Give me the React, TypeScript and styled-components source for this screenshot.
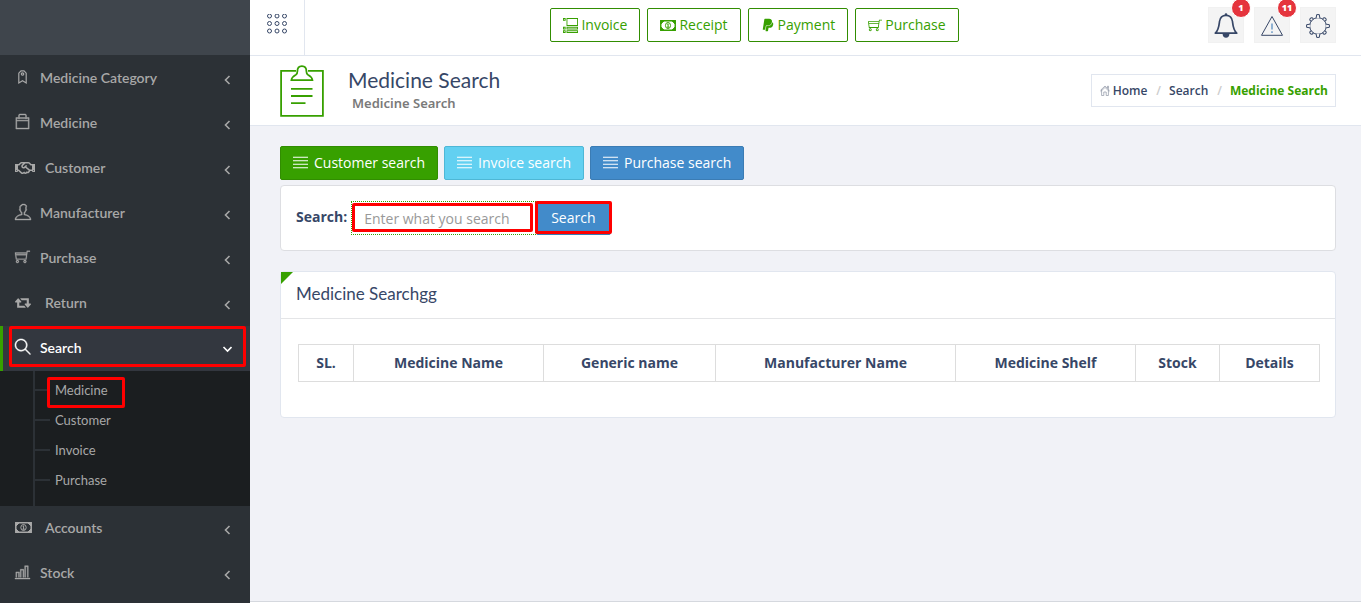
import React from "react";
import styled, { createGlobalStyle, css } from "styled-components";
import {
  TfiBag,
  TfiUser,
  TfiShoppingCart,
  TfiSearch,
  TfiBarChart,
  TfiAlignJustify,
  TfiLayoutAccordionList,
} from "react-icons/tfi";
import { FaRegHandshake, FaPaypal } from "react-icons/fa";

const heading = `Lato, "Noto Sans", sans-serif`;
const green = "#37a000";
const ink = "#374767";
const line = "#e1e6ef";

const GlobalStyle = createGlobalStyle`
  *, *::before, *::after { box-sizing: border-box; }
  body {
    margin: 0;
    background: #f1f2f7;
    color: ${ink};
    font: 14px/20px "Open Sans", sans-serif;
  }
  a { color: inherit; text-decoration: none; }
  button, input { font: inherit; }
  h1, h2, ul, ol { margin: 0; padding: 0; list-style: none; font-weight: 400; }
  svg { display: block; flex: none; }
`;

const marker = css`
  &::after {
    content: "";
    position: absolute;
    border: 3px solid #ff0000;
    border-radius: 2px;
    pointer-events: none;
  }
`;

const Shell = styled.div`
  display: flex;
  min-height: 100vh;
`;

const Sidebar = styled.aside`
  flex: none;
  width: 250px;
  background: #2c3136;
  color: #a8a8a8;
  font-family: ${heading};
`;

const Logo = styled.div`
  height: 55px;
  margin-bottom: 1px;
  background: #3f454c;
`;

const MenuLink = styled.a<{ $active?: boolean }>`
  position: relative;
  display: flex;
  align-items: center;
  height: 45px;
  padding: 0 18px 2px 15px;
  font-size: 14px;
  font-weight: 600;
  ${(p) =>
    p.$active &&
    css`
      background: #33373f;
      color: #fff;
      border-left: 3px solid ${green};
      padding-left: 12px;
      ${marker}
      &::after {
        inset: 0 4px 4px 6px;
      }
    `}
`;

const MenuIcon = styled.span<{ $wide?: boolean }>`
  display: flex;
  justify-content: ${(p) => (p.$wide ? "flex-start" : "center")};
  width: ${(p) => (p.$wide ? 20 : 15)}px;
  margin-right: 10px;
  padding-bottom: ${(p) => (p.$wide ? 0 : 2)}px;

  svg {
    overflow: visible;
  }
`;

const MenuLabel = styled.span`
  flex: 1;
`;

const ArrowBox = styled.span`
  width: 10px;
  padding-top: 4px;
`;

const SubMenu = styled.div`
  background: #1b1e20;
  padding-left: 33px;
`;

const SubTrack = styled.ul`
  && {
    border-left: 2px solid #2c3136;
    padding: 4px 0 11px;
  }
`;

const SubItem = styled.li`
  display: flex;
  align-items: center;
  height: 30px;
  font-size: 13px;

  &::before {
    content: "";
    width: 15px;
    height: 2px;
    margin-right: 5px;
    background: #2c3136;
  }
`;

const SubLink = styled.a<{ $marked?: boolean }>`
  position: relative;
  ${(p) =>
    p.$marked &&
    css`
      ${marker}
      &::after {
        inset: -3px -17px -8px -8px;
      }
    `}
`;

const Page = styled.div`
  flex: 1;
  min-width: 0;
  display: flex;
  flex-direction: column;
`;

const TopBar = styled.header`
  display: flex;
  align-items: stretch;
  height: 56px;
  background: #fff;
  border-bottom: 1px solid ${line};
`;

const Toggle = styled.button`
  width: 55px;
  padding: 0 0 8px 17px;
  border: 0;
  border-right: 1px solid ${line};
  background: none;
  color: ${ink};
`;

const QuickLinks = styled.nav`
  flex: 1;
  display: flex;
  align-items: flex-start;
  justify-content: center;
  gap: 7px;
  padding: 8px 4px 0 0;
`;

const QuickLink = styled.a`
  display: flex;
  align-items: center;
  gap: 3px;
  height: 34px;
  padding: 0 12px;
  border: 1px solid #318d01;
  border-radius: 2px;
  color: ${green};
`;

const Alerts = styled.div`
  display: flex;
  gap: 10px;
  padding: 7px 25px 0 0;
`;

const AlertButton = styled.button`
  position: relative;
  width: 36px;
  height: 36px;
  display: grid;
  place-items: center;
  padding: 2px 0 0;
  border: 1px solid #f1f1f1;
  background: #f4f4f4;
  color: ${ink};
`;

const Badge = styled.span`
  position: absolute;
  top: -10px;
  right: -8px;
  width: 20px;
  height: 20px;
  border: 1px solid #fff;
  border-radius: 50%;
  background: #e5343d;
  color: #fff;
  font: 800 9px/18px "Open Sans", sans-serif;
  text-align: center;
`;

const PageHead = styled.section`
  display: flex;
  align-items: center;
  height: 70px;
  padding: 0 25px 0 30px;
  background: #fff;
  border-bottom: 1px solid ${line};
`;

const Titles = styled.div`
  flex: 1;
  padding: 0 0 2px 24px;
`;

const Title = styled.h1`
  font: 400 21px/26px ${heading};
`;

const Subtitle = styled.p`
  margin: 0 0 0 4px;
  font: 600 13px/20px "Noto Sans", sans-serif;
  color: #7a7a7a;
`;

const Crumbs = styled.ol`
  && {
    display: flex;
    align-items: center;
    height: 33px;
    padding: 0 7px 0 8px;
    border: 1px solid ${line};
    font-size: 12px;
    font-weight: 600;
  }
`;

const Crumb = styled.li<{ $current?: boolean }>`
  display: flex;
  align-items: center;
  gap: 3px;
  ${(p) =>
    p.$current &&
    css`
      color: ${green};
      font-weight: 700;
    `}

  li + &::before {
    content: "/";
    padding: 0 5px 0 9px;
    color: #ccc;
    font-weight: 600;
  }
`;

const Content = styled.main`
  flex: 1;
  padding: 20px 25px 20px 30px;
`;

const Actions = styled.div`
  display: flex;
  gap: 6px;
  margin-bottom: 5px;
`;

const tones = {
  success: "#37a000",
  info: "#62d0f1",
  primary: "#428bca",
};
const edges = {
  success: "#318d01",
  info: "#4eb7d6",
  primary: "#3b7cb4",
};

const buttonLook = css<{ $tone: keyof typeof tones }>`
  display: flex;
  align-items: center;
  gap: 6px;
  height: 34px;
  padding: 0 12px;
  border: 1px solid ${(p) => edges[p.$tone]};
  border-radius: 2px;
  background: ${(p) => tones[p.$tone]};
  color: #fff;
`;

const ActionLink = styled.a<{ $tone: keyof typeof tones }>`
  ${buttonLook}

  svg {
    margin-bottom: 2px;
  }
`;

const SearchPanel = styled.form`
  display: flex;
  align-items: flex-start;
  padding: 15px;
  height: 66px;
  border: 1px solid #dddee2;
  border-radius: 4px;
  background: #fff;
`;

const SearchLabel = styled.label`
  font-weight: 700;
  line-height: 32px;
  margin-right: 4px;
`;

const Field = styled.span`
  position: relative;
  ${marker}
  &::after {
    inset: 2px 3px 3px 1px;
  }
`;

const SearchInput = styled.input`
  display: block;
  width: 185px;
  height: 34px;
  padding: 0 12px;
  border: 1px dotted ${green};
  background: #fff;
  color: ${ink};
  outline: none;
  &::placeholder {
    color: #999;
    opacity: 1;
  }
`;

const SubmitWrap = styled.span`
  position: relative;
  ${marker}
  &::after {
    inset: 0 -1px 1px -1px;
  }
`;

const Submit = styled.button<{ $tone: keyof typeof tones }>`
  ${buttonLook}
  padding: 0 14px;
`;

const ResultPanel = styled.section`
  margin-top: 20px;
  border: 1px solid ${line};
  border-radius: 4px;
  background: #fff;
`;

const ResultHead = styled.div`
  position: relative;
  height: 47px;
  padding: 10px 15px;
  border-bottom: 1px solid #e4e5e7;

  &::before {
    content: "";
    position: absolute;
    top: 0;
    left: 0;
    border-top: 12px solid ${green};
    border-right: 12px solid transparent;
  }
`;

const ResultTitle = styled.h2`
  font: 400 17px/24px ${heading};
`;

const ResultBody = styled.div`
  padding: 25px 15px 35px 17px;
`;

const Table = styled.table`
  width: 100%;
  border-collapse: collapse;
  table-layout: fixed;
`;

const Th = styled.th<{ $width: number }>`
  width: ${(p) => p.$width}px;
  height: 37px;
  padding: 0 8px;
  border: 1px solid #ddd;
  font-weight: 700;
`;

const Footer = styled.footer`
  height: 2px;
  background: #fff;
  border-top: 1px solid #d5d8de;
`;

const Keypad = () => (
  <svg width="20" height="20" viewBox="0 0 20 20" fill="none" stroke="currentColor">
    {[2, 9.5, 17].map((y) => [2.5, 10, 17.5].map((x) => <circle key={`${x}-${y}`} cx={x} cy={y} r="2" />))}
  </svg>
);

const Arrow = ({ down }: { down?: boolean }) => (
  <svg width="10" height="10" viewBox="0 0 10 10" fill="none" stroke="currentColor" strokeWidth="1.6">
    <path d={down ? "M1.500 2l4 4 4-4" : "M7.500 1l-4 4 4 4"} />
  </svg>
);

const Tag = () => (
  <svg width="9" height="14" viewBox="0 0 9 14" fill="none" stroke="currentColor" strokeWidth="1.200">
    <path d="M.8 13V3.200L3 .8h3l2.200 2.400V13L4.500 10.800z" />
    <circle cx="4.500" cy="4" r="1.200" />
  </svg>
);

const Money = ({ width }: { width: number }) => (
  <svg width={width} height="11" viewBox="0 0 17 11" preserveAspectRatio="none" fill="none" stroke="currentColor">
    <path d="M.8.8h15.400v9.400H.8z" strokeWidth="1.500" />
    <path d="M1 1h3L1 4zM16 1h-3l3 3zM1 10h3L1 7zM16 10h-3l3-3z" fill="currentColor" />
    <ellipse cx="8.500" cy="5.500" rx="2.700" ry="3" />
    <path d="M7.700 4.300l.9-.5v3.400M7.500 7.200h2.200" />
  </svg>
);

const Retweet = () => (
  <svg width="16" height="10" viewBox="0 384 1920 1152" fill="currentColor">
    <path d="M1280 1504q0 13-9.500 22.500t-22.500 9.500h-960q-8 0-13.500-2t-9-7-5.500-8-3-11.500-1-11.500v-600h-192q-26 0-45-19t-19-45q0-24 15-41l320-384q19-22 49-22t49 22l320 384q15 17 15 41 0 26-19 45t-45 19h-192v384h576q16 0 25 11l160 192q7 10 7 21zm640-416q0 24-15 41l-320 384q-20 23-49 23t-49-23l-320-384q-15-17-15-41 0-26 19-45t45-19h192v-384h-576q-16 0-25-12l-160-192q-7-9-7-20 0-13 9.500-22.500t22.500-9.500h960q8 0 13.500 2t9 7 5.500 8 3 11.500 1 11.500v600h192q26 0 45 19t19 45z" />
  </svg>
);

const Clipboard = () => (
  <svg width="44" height="52" viewBox="0 0 44 52" fill="none" stroke={green} strokeWidth="1.8">
    <path d="M16 5.900H1.100v45h41.800v-45H28" />
    <path d="M11.400 15.100h21c-.4-2.800-2.800-4.400-4.500-5.300-1.400-.8-1.500-1.900-1.500-3.500 0-3-1.700-5.100-4.500-5.100s-4.500 2.100-4.500 5.100c0 1.600-.1 2.700-1.500 3.500-1.700.9-4.100 2.500-4.500 5.300z" />
    <path d="M11 23.800h21.500M11 31h21.500M11 38.200h14.500" />
  </svg>
);

const Bell = () => (
  <svg width="24" height="26" viewBox="0 0 24 26" fill="none" stroke="currentColor" strokeWidth="1.7">
    <path d="M12 2.300c-4 0-6 2.700-6.500 6.200-.5 4.500-.7 8.300-4.200 11.700h21.400c-3.500-3.400-3.700-7.200-4.200-11.700C18 5 16 2.300 12 2.300z" strokeLinejoin="round" />
    <path d="M8.600 21h6.800c0 2.300-1.400 3.700-3.400 3.700S8.600 23.300 8.600 21z" fill="currentColor" stroke="none" />
    <circle cx="12" cy="1.500" r="1.300" fill="currentColor" stroke="none" />
  </svg>
);

const Warning = () => (
  <svg width="24" height="22" viewBox="0 0 24 22" fill="none" stroke="currentColor">
    <path d="M12 1.500l10.500 18.800h-21z" />
    <path d="M12 8.500v6M12 16.300v1.600" stroke="#5b8fc0" strokeWidth="1.300" />
  </svg>
);

const Gear = () => (
  <svg width="24" height="24" viewBox="0 0 24 24" fill="none" stroke="currentColor">
    <circle cx="12" cy="12" r="8.300" />
    {[0, 90, 180, 270].map((a) => (
      <path key={a} d="M10.200 3.900l.5-3.300h2.600l.5 3.300" fill="#f4f4f4" transform={`rotate(${a} 12 12)`} />
    ))}
    {[45, 135, 225, 315].map((a) => (
      <path key={a} d="M10.500 3.900c-.7-1.700.2-2.700 1.500-2.700s2.200 1 1.500 2.700" transform={`rotate(${a} 12 12)`} />
    ))}
  </svg>
);

const Home = () => (
  <svg width="10" height="11" viewBox="0 0 10 11" fill="none" stroke="#8c93a3" strokeWidth=".7">
    <path d="M.4 5.400L5 1l4.600 4.400M1.600 4.500v6h2.200V7h2.400v3.500h2.200v-6M.6 6.600L5 2.400l4.400 4.200M7.500 3V1.200h1v2.600" />
  </svg>
);

type Entry = { label: string; icon: React.ReactNode; wide?: boolean };

const before: Entry[] = [
  { label: "Medicine Category", icon: <Tag /> },
  { label: "Medicine", icon: <TfiBag size={15} strokeWidth={0.5} /> },
  { label: "Customer", icon: <FaRegHandshake size={20} />, wide: true },
  { label: "Manufacturer", icon: <TfiUser size={16} strokeWidth={0.4} /> },
  { label: "Purchase", icon: <TfiShoppingCart size={15} strokeWidth={0.3} /> },
  { label: "Return", icon: <Retweet />, wide: true },
];
const after: Entry[] = [
  { label: "Accounts", icon: <Money width={17} />, wide: true },
  { label: "Stock", icon: <TfiBarChart size={15} strokeWidth={0.5} /> },
];
const columns: [string, number][] = [
  ["SL.", 55],
  ["Medicine Name", 190],
  ["Generic name", 172],
  ["Manufacturer Name", 240],
  ["Medicine Shelf", 180],
  ["Stock", 84],
  ["Details", 100],
];

const MenuEntry = ({ label, icon, wide }: Entry) => (
  <MenuLink href="#">
    <MenuIcon $wide={wide}>{icon}</MenuIcon>
    <MenuLabel>{label}</MenuLabel>
    <ArrowBox>
      <Arrow />
    </ArrowBox>
  </MenuLink>
);

export default function App() {
  return (
    <>
      <GlobalStyle />
      <Shell>
        <Sidebar>
          <Logo />
          <nav>
            {before.map((e) => (
              <MenuEntry key={e.label} {...e} />
            ))}
            <MenuLink href="#" $active>
              <MenuIcon>
                <TfiSearch size={16} strokeWidth={0.6} />
              </MenuIcon>
              <MenuLabel>Search</MenuLabel>
              <ArrowBox>
                <Arrow down />
              </ArrowBox>
            </MenuLink>
            <SubMenu>
              <SubTrack>
                {["Medicine", "Customer", "Invoice", "Purchase"].map((s, i) => (
                  <SubItem key={s}>
                    <SubLink href="#" $marked={i === 0}>
                      {s}
                    </SubLink>
                  </SubItem>
                ))}
              </SubTrack>
            </SubMenu>
            {after.map((e) => (
              <MenuEntry key={e.label} {...e} />
            ))}
          </nav>
        </Sidebar>
        <Page>
          <TopBar>
            <Toggle type="button" aria-label="Toggle navigation">
              <Keypad />
            </Toggle>
            <QuickLinks>
              <QuickLink href="#"><TfiLayoutAccordionList size={15} />Invoice</QuickLink>
              <QuickLink href="#"><Money width={16} />Receipt</QuickLink>
              <QuickLink href="#"><FaPaypal size={14} />Payment</QuickLink>
              <QuickLink href="#"><TfiShoppingCart size={14} />Purchase</QuickLink>
            </QuickLinks>
            <Alerts>
              <AlertButton type="button" aria-label="Notifications"><Bell /><Badge>1</Badge></AlertButton>
              <AlertButton type="button" aria-label="Warnings"><Warning /><Badge>11</Badge></AlertButton>
              <AlertButton type="button" aria-label="Settings"><Gear /></AlertButton>
            </Alerts>
          </TopBar>
          <PageHead>
            <Clipboard />
            <Titles>
              <Title>Medicine Search</Title>
              <Subtitle>Medicine Search</Subtitle>
            </Titles>
            <Crumbs>
              <Crumb><Home /><a href="#">Home</a></Crumb>
              <Crumb><a href="#">Search</a></Crumb>
              <Crumb $current>Medicine Search</Crumb>
            </Crumbs>
          </PageHead>
          <Content>
            <Actions>
              <ActionLink href="#" $tone="success"><TfiAlignJustify size={15} />Customer search</ActionLink>
              <ActionLink href="#" $tone="info"><TfiAlignJustify size={15} />Invoice search</ActionLink>
              <ActionLink href="#" $tone="primary"><TfiAlignJustify size={15} />Purchase search</ActionLink>
            </Actions>
            <SearchPanel onSubmit={(e) => e.preventDefault()}>
              <SearchLabel htmlFor="what">Search:</SearchLabel>
              <Field>
                <SearchInput id="what" type="text" placeholder="Enter what you search" />
              </Field>
              <SubmitWrap>
                <Submit type="submit" $tone="primary">Search</Submit>
              </SubmitWrap>
            </SearchPanel>
            <ResultPanel>
              <ResultHead>
                <ResultTitle>Medicine Searchgg</ResultTitle>
              </ResultHead>
              <ResultBody>
                <Table>
                  <thead>
                    <tr>
                      {columns.map(([name, width]) => (
                        <Th key={name} scope="col" $width={width}>{name}</Th>
                      ))}
                    </tr>
                  </thead>
                </Table>
              </ResultBody>
            </ResultPanel>
          </Content>
          <Footer />
        </Page>
      </Shell>
    </>
  );
}
